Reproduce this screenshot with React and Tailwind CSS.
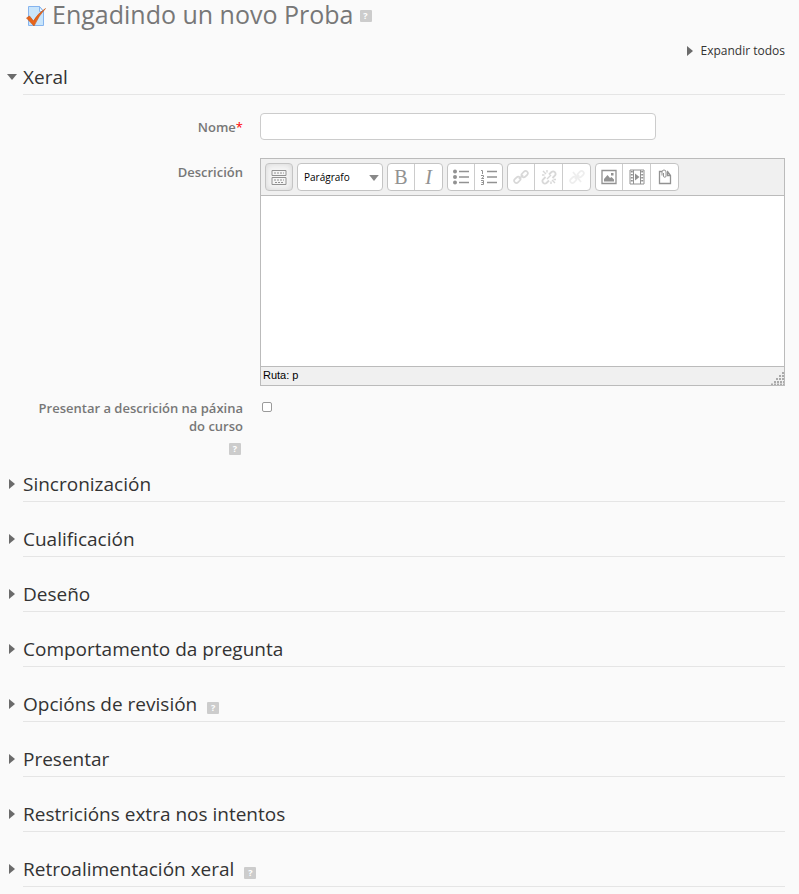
import { useState } from 'react'

const sections = [
  { id: 'timing', title: 'Sincronización' },
  { id: 'grade', title: 'Cualificación' },
  { id: 'layout', title: 'Deseño' },
  { id: 'behaviour', title: 'Comportamento da pregunta' },
  { id: 'review', title: 'Opcións de revisión', help: true },
  { id: 'display', title: 'Presentar' },
  { id: 'security', title: 'Restricións extra nos intentos' },
  { id: 'feedback', title: 'Retroalimentación xeral', help: true },
]

const link = (
  <>
    <rect x="8" y="3" width="7" height="4.5" rx="2.2" transform="rotate(-45 11.5 5)" />
    <rect x="1" y="8.5" width="7" height="4.5" rx="2.2" transform="rotate(-45 4.5 11)" />
    <path d="M6 10 10 6" />
  </>
)

const icons = {
  toggle: (
    <>
      <path d="M1 1.5h14v5H1zM1 8.5h14v7H1z" />
      <path d="M3 4h10M3 11h10M4 13.5h8" strokeDasharray="2 1" />
    </>
  ),
  bullets: (
    <>
      <path d="M6 2.5h10M6 8h10M6 13.5h10" strokeWidth="1.6" />
      <g fill="currentColor" stroke="none">
        <circle cx="2" cy="2.5" r="2" />
        <circle cx="2" cy="8" r="2" />
        <circle cx="2" cy="13.5" r="2" />
      </g>
    </>
  ),
  numbers: (
    <>
      <path d="M6 2.5h10M6 8h10M6 13.5h10" strokeWidth="1.6" />
      <path d="M0 1.5h1.5V5M0 6.5h2.5v1.5L.5 9.5H3M0 11.5h2.5v4H0M.5 13.5h2" />
    </>
  ),
  link: <g strokeWidth="1.7">{link}</g>,
  unlink: (
    <>
      <path
        d="M8 5.5 10.5 3a2.5 2.5 0 0 1 3.5 3.5L11.5 9M8 11.5 5.5 14A2.5 2.5 0 0 1 2 10.5L4.5 8"
        strokeWidth="1.8"
      />
      <path d="M6 10 10 6M2 2l3 3M6 1v2.5M1 6h2.5M14 14l-3-3M10 15v-2.5M15 10.5h-2.5" strokeWidth="1.4" />
    </>
  ),
  nolink: (
    <g strokeWidth="1.7">
      {link}
      <path d="m4 3 8 10" />
    </g>
  ),
  image: (
    <>
      <path d="M1 1.5h14v13H1z" strokeWidth="1.3" />
      <path d="M3 12.5V10l3.5-4L9 9l1.5-1 2.5 2.5v2zM10 4h2.5v2.5H10z" fill="currentColor" stroke="none" />
    </>
  ),
  media: (
    <>
      <path d="M1 1h14v14H1zM4.5 1v14M11.5 1v14" />
      <path d="M2.8 2v12M13.2 2v12" strokeWidth="2" strokeDasharray="1.5 1.5" />
      <path d="M6 4.5 10.5 8 6 11.5z" fill="currentColor" stroke="none" />
    </>
  ),
  files: (
    <>
      <path d="M5 2.5H2.5v12h11v-8l-3-4H10M10.5 3v3.5h3" strokeWidth="1.3" />
      <path d="M5 6.5V3a2 2 0 0 1 4 0v4a1.2 1.2 0 0 1-2.5 0V4" />
    </>
  ),
}

const toolbar = [
  [
    { name: 'Grosa', text: 'B' },
    { name: 'Cursiva', text: 'I', className: 'italic' },
  ],
  [
    { name: 'Lista sen ordenar', icon: 'bullets' },
    { name: 'Lista ordenada', icon: 'numbers' },
  ],
  [
    { name: 'Inserir ligazón', icon: 'link', className: 'opacity-35' },
    { name: 'Retirar ligazón', icon: 'unlink', className: 'opacity-35' },
    { name: 'Evitar ligazón automática', icon: 'nolink', className: 'opacity-15' },
  ],
  [
    { name: 'Inserir imaxe', icon: 'image' },
    { name: 'Inserir multimedia', icon: 'media' },
    { name: 'Xestionar ficheiros', icon: 'files' },
  ],
]

function Icon({ name }) {
  return (
    <svg viewBox="0 0 16 16" className="size-4" fill="none" stroke="currentColor" aria-hidden="true">
      {icons[name]}
    </svg>
  )
}

function Arrow({ open }) {
  return open ? (
    <svg viewBox="0 0 10 6" className="h-1.5 w-2.5 shrink-0" fill="#6b6b6b" aria-hidden="true">
      <path d="M0 0h10L5 6z" />
    </svg>
  ) : (
    <svg viewBox="0 0 6 10" className="h-2.5 w-1.5 shrink-0" fill="#6b6b6b" aria-hidden="true">
      <path d="M0 0v10l6-5z" />
    </svg>
  )
}

function HelpButton() {
  return (
    <button
      type="button"
      aria-label="Axuda"
      className="flex size-3 shrink-0 items-center justify-center rounded-[1px] bg-[#cccccc] text-[9px] leading-3 font-bold text-white"
    >
      ?
    </button>
  )
}

function SectionHeading({ title, open, help, onToggle }) {
  return (
    <div className="flex h-8 gap-1.5">
      <button
        type="button"
        onClick={onToggle}
        aria-label={title}
        aria-expanded={open}
        className="flex w-2.5 shrink-0 items-center justify-center pb-1"
      >
        <Arrow open={open} />
      </button>
      <h2 className="flex grow items-center gap-2.5 border-b border-[#e5e5e5] pb-1 text-[19px] leading-7 text-[#333333]">
        {title}
        {help && (
          <span className="pt-2">
            <HelpButton />
          </span>
        )}
      </h2>
    </div>
  )
}

function Editor() {
  return (
    <div className="border border-[#bbbbbb] bg-white">
      <div className="flex flex-wrap gap-1 border-b border-[#bbbbbb] bg-[#f0f0f0] p-1 text-[#929292]">
        <button
          type="button"
          aria-label="Alternar barra de ferramentas"
          className="flex h-7 w-7 items-center justify-center rounded-sm border border-[#c4c4c4] bg-[#f5f5f5] shadow-[inset_0_0_6px_#d4d4d4]"
        >
          <Icon name="toggle" />
        </button>
        <div className="relative">
          <select
            aria-label="Formato"
            className="h-7 w-[86px] appearance-none rounded-sm border border-[#c4c4c4] bg-white pl-1.5 text-[10px] text-black"
          >
            <option>Parágrafo</option>
          </select>
          <svg
            viewBox="0 0 8 5"
            className="pointer-events-none absolute top-3 right-1 h-1.5 w-2.5"
            fill="#888888"
            aria-hidden="true"
          >
            <path d="M0 0h8L4 5z" />
          </svg>
        </div>
        {toolbar.map((group) => (
          <div
            key={group[0].name}
            className="flex h-7 divide-x divide-[#cccccc] rounded-sm border border-[#c4c4c4] bg-white"
          >
            {group.map((item) => (
              <button
                key={item.name}
                type="button"
                aria-label={item.name}
                className="flex w-7 items-center justify-center first:w-[27px] last:w-[27px]"
              >
                <span className={item.className}>
                  {item.icon ? (
                    <Icon name={item.icon} />
                  ) : (
                    <span className="font-['Liberation_Serif',serif] text-xl font-medium">{item.text}</span>
                  )}
                </span>
              </button>
            ))}
          </div>
        ))}
      </div>
      <textarea id="description" className="block h-[170px] w-full resize-none outline-none" />
      <div className="flex h-[19px] items-end justify-between border-t border-[#bbbbbb] bg-[#f0f0f0] pl-0.5">
        <span className="self-start font-['Liberation_Sans',sans-serif] text-[11px] leading-4 text-black">
          Ruta: p
        </span>
        <svg viewBox="0 0 13 13" className="size-[13px]" stroke="#aaaaaa" strokeWidth="2" aria-hidden="true">
          <path d="M11 1h2M8 4h5M5 7h8M3 10h10M0 12.5h13" strokeDasharray="2 1" />
        </svg>
      </div>
    </div>
  )
}

function App() {
  const [open, setOpen] = useState({ general: true })

  const toggle = (id) => setOpen((prev) => ({ ...prev, [id]: !prev[id] }))

  return (
    <main className="min-h-screen bg-[#fafafa] pr-3.5 pb-2 pl-[7px] font-['Open_Sans',sans-serif] text-[13px] leading-[18px] text-[#777777]">
      <header className="flex h-8 items-center gap-1.5 pl-[18px]">
        <svg viewBox="0 0 21 22" className="h-[22px] w-[21px]" aria-hidden="true">
          <path d="M3.5 1.5h11l4 5v14h-15z" fill="#c9e5fb" stroke="#86b4ee" />
          <path d="M14.5 1.5v5h4z" fill="#f1f9ff" stroke="#86b4ee" />
          <path
            d="M1.5 13 4.500 11l4 5Q12 9 20.500 3.500 14 10 9 21z"
            fill="#e8641b"
            stroke="#c2500f"
            strokeWidth="0.6"
          />
        </svg>
        <h1 className="pb-1 text-[25px] leading-7">Engadindo un novo Proba</h1>
        <HelpButton />
      </header>

      <form onSubmit={(e) => e.preventDefault()}>
        <div className="flex h-[31px] items-center justify-end pt-1.5">
          <button type="button" className="flex items-center gap-2 text-xs leading-4 text-[#333333]">
            <Arrow />
            Expandir todos
          </button>
        </div>

        <SectionHeading title="Xeral" open={open.general} onToggle={() => toggle('general')} />
        {open.general && (
          <div className="pt-[18px] pl-4">
            <div className="grid grid-cols-[220px_1fr] gap-[17px] pb-[18px]">
              <label htmlFor="name" className="pt-[5px] text-right font-semibold">
                Nome<span className="font-normal text-[#ff0000]">*</span>
              </label>
              <input
                id="name"
                type="text"
                className="h-[27px] w-[396px] max-w-full rounded-sm border border-[#cccccc] bg-white px-1.5 text-[#555555]"
              />
            </div>
            <div className="grid grid-cols-[220px_1fr] gap-[17px] pb-[13px]">
              <label htmlFor="description" className="pt-[5px] text-right font-semibold">
                Descrición
              </label>
              <Editor />
            </div>
            <div className="grid grid-cols-[220px_1fr] gap-[17px] pb-[15px]">
              <div className="flex flex-col items-end gap-2">
                <label htmlFor="showdescription" className="text-right font-semibold">
                  Presentar a descrición na páxina do curso
                </label>
                <span className="pr-0.5">
                  <HelpButton />
                </span>
              </div>
              <input
                id="showdescription"
                type="checkbox"
                className="mt-[3px] ml-0.5 size-2.5 appearance-none rounded-xs border border-[#9a9a9a] bg-white checked:bg-[#777777]"
              />
            </div>
          </div>
        )}

        <div className="space-y-[23px]">
          {sections.map((section) => (
            <SectionHeading
              key={section.id}
              title={section.title}
              help={section.help}
              open={open[section.id]}
              onToggle={() => toggle(section.id)}
            />
          ))}
        </div>
      </form>
    </main>
  )
}

export default App
